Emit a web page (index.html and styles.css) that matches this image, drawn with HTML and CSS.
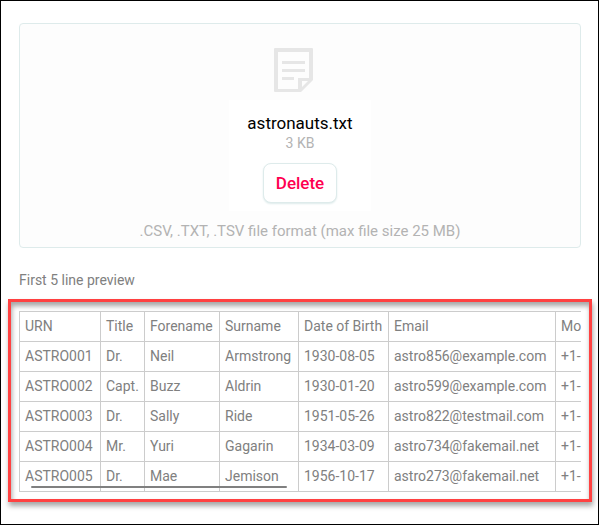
FILE: index.html
```html
<!DOCTYPE html>
<html lang="en">
<head>
  <meta charset="UTF-8" />
  <meta name="viewport" content="width=device-width, initial-scale=1.0" />
  <title>File upload</title>
  <link rel="stylesheet" href="styles.css">
</head>
<body>
  <main class="page">
    <section class="dropzone">
      <svg class="file-icon" viewBox="0 0 40 44" aria-hidden="true">
        <path fill="#e6e6e6" fill-rule="evenodd" d="M1 0H38Q39 0 39 1V32L27 44H1Q0 44 0 43V1Q0 0 1 0ZM4 4V41H24V30H35V4Z" />
        <path fill="#fdfdfd" d="M28 33H34L28 39Z" />
        <path fill="#e6e6e6" d="M8 13H31V16H8ZM8 21H31V24H8ZM8 29H20V32H8Z" />
      </svg>
      <div class="file-card">
        <div class="file-name">astronauts.txt</div>
        <div class="file-size">3 KB</div>
        <button type="button" class="delete-btn">Delete</button>
      </div>
      <p class="hint">.CSV, .TXT, .TSV file format (max file size 25 MB)</p>
    </section>

    <p class="preview-label" id="preview-label">First 5 line preview</p>

    <section class="preview">
      <div class="table-wrap">
        <table class="preview-table" aria-labelledby="preview-label">
          <colgroup>
            <col class="col-urn"><col class="col-title"><col class="col-forename"><col class="col-surname"><col class="col-dob"><col class="col-email"><col class="col-mobile">
          </colgroup>
          <thead>
            <tr><th>URN</th><th>Title</th><th>Forename</th><th>Surname</th><th>Date of Birth</th><th>Email</th><th>Mo</th></tr>
          </thead>
          <tbody>
            <tr><td>ASTRO001</td><td>Dr.</td><td>Neil</td><td>Armstrong</td><td>1930-08-05</td><td>astro856@example.com</td><td>+1-</td></tr>
            <tr><td>ASTRO002</td><td>Capt.</td><td>Buzz</td><td>Aldrin</td><td>1930-01-20</td><td>astro599@example.com</td><td>+1-</td></tr>
            <tr><td>ASTRO003</td><td>Dr.</td><td>Sally</td><td>Ride</td><td>1951-05-26</td><td>astro822@testmail.com</td><td>+1-</td></tr>
            <tr><td>ASTRO004</td><td>Mr.</td><td>Yuri</td><td>Gagarin</td><td>1934-03-09</td><td>astro734@fakemail.net</td><td>+1-</td></tr>
            <tr><td>ASTRO005</td><td>Dr.</td><td>Mae</td><td>Jemison</td><td>1956-10-17</td><td>astro273@fakemail.net</td><td>+1-</td></tr>
          </tbody>
        </table>
        <div class="scroll-thumb"></div>
      </div>
    </section>
  </main>
</body>
</html>
```

FILE: styles.css
```css
* {
  box-sizing: border-box;
}

body {
  margin: 0;
  background: #fff;
  font-family: Roboto, sans-serif;
  font-size: 14px;
  color: #808080;
}

.page {
  min-height: 100vh;
  padding: 22px 6px 20px 7px;
  border: 1px solid #000;
}

.dropzone {
  display: flex;
  flex-direction: column;
  align-items: center;
  margin: 0 11px;
  padding: 24px 0 6px;
  border: 1px solid #deebeb;
  border-radius: 4px;
  background: #fdfdfd;
}

.file-icon {
  width: 40px;
  height: 44px;
  margin-left: -12px;
}

.file-card {
  display: flex;
  flex-direction: column;
  align-items: center;
  min-width: 142px;
  margin-top: 8px;
  padding: 13px 12px 8px;
  background: #fff;
}

.file-name {
  font-size: 17px;
  line-height: 20px;
  color: #000;
}

.file-size {
  line-height: 20px;
  color: #b3b3b3;
}

.delete-btn {
  height: 40px;
  margin-top: 10px;
  padding: 0 12px;
  border: 1px solid #deebeb;
  border-radius: 8px;
  background: #fff;
  box-shadow: 0 1px 2px #deebeb;
  font-family: inherit;
  font-size: 17px;
  font-weight: 500;
  color: #ff0050;
  cursor: pointer;
}

.hint {
  margin: 10px 0 0;
  font-size: 15px;
  line-height: 20px;
  color: #b3b3b3;
}

.preview-label {
  margin: 22px 11px 0;
  line-height: 20px;
}

.preview {
  margin-top: 9px;
  padding: 9px 8px 7px;
  border: 3px solid #ff4141;
  box-shadow: 1px 4px 5px rgba(0, 0, 0, 0.35), inset 1px 4px 5px rgba(0, 0, 0, 0.35);
}

.table-wrap {
  position: relative;
  overflow: hidden;
}

.preview-table {
  width: 600px;
  table-layout: fixed;
  border-collapse: collapse;
  background: #fff;
}

.preview-table th,
.preview-table td {
  height: 30px;
  padding: 0 5px 2px;
  border: 1px solid #ccc;
  font-weight: 400;
  line-height: 20px;
  text-align: left;
  white-space: nowrap;
}

.col-urn {
  width: 81px;
}

.col-title {
  width: 44px;
}

.col-forename {
  width: 75px;
}

.col-surname {
  width: 79px;
}

.col-dob {
  width: 90px;
}

.col-email {
  width: 167px;
}

/* overlay scrollbar */
.scroll-thumb {
  position: absolute;
  bottom: 4px;
  left: 12px;
  width: 256px;
  height: 2px;
  border-radius: 1px;
  background: #808080;
}
```
